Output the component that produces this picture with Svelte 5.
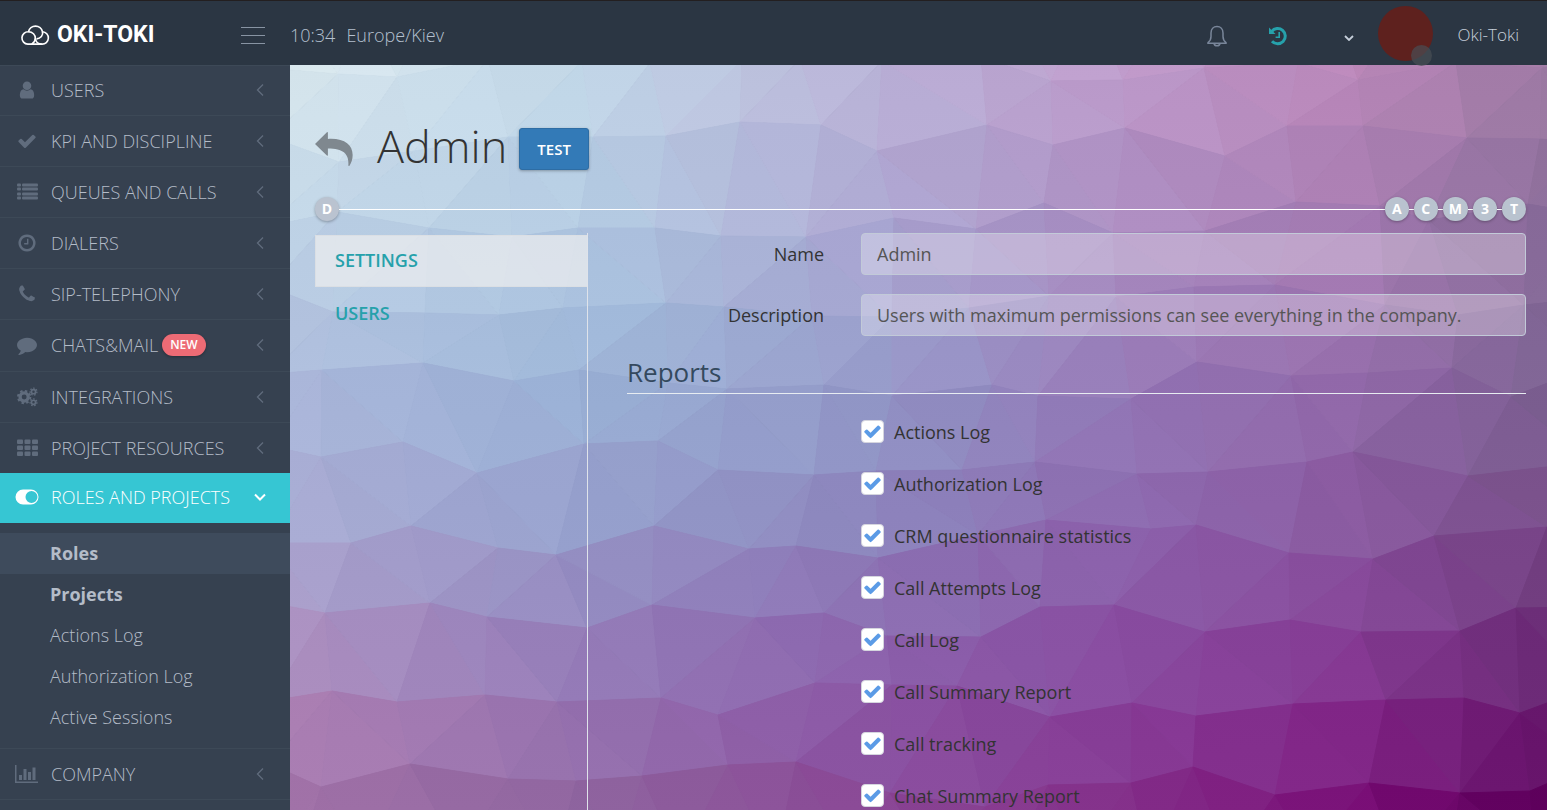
<script lang="ts">
  type Point = [number, number];
  type Rgb = [number, number, number];

  interface MenuItem {
    label: string;
    icon: string;
    badge?: string;
    active?: boolean;
    children?: { label: string; bold?: boolean; current?: boolean }[];
  }

  const menu: MenuItem[] = [
    { label: 'USERS', icon: 'user' },
    { label: 'KPI AND DISCIPLINE', icon: 'check' },
    { label: 'QUEUES AND CALLS', icon: 'list' },
    { label: 'DIALERS', icon: 'clock' },
    { label: 'SIP-TELEPHONY', icon: 'phone' },
    { label: 'CHATS&MAIL', icon: 'comment', badge: 'NEW' },
    { label: 'INTEGRATIONS', icon: 'cogs' },
    { label: 'PROJECT RESOURCES', icon: 'th' },
    {
      label: 'ROLES AND PROJECTS',
      icon: 'toggle',
      active: true,
      children: [
        { label: 'Roles', bold: true, current: true },
        { label: 'Projects', bold: true },
        { label: 'Actions Log' },
        { label: 'Authorization Log' },
        { label: 'Active Sessions' },
      ],
    },
    { label: 'COMPANY', icon: 'chart' },
  ];

  const letters = ['A', 'C', 'M', '3', 'T'];

  let name = $state('Admin');
  let description = $state('Users with maximum permissions can see everything in the company.');
  let reports = $state(
    [
      'Actions Log',
      'Authorization Log',
      'CRM questionnaire statistics',
      'Call Attempts Log',
      'Call Log',
      'Call Summary Report',
      'Call tracking',
      'Chat Summary Report',
    ].map((label) => ({ label, checked: true })),
  );

  // single-path icons on a 1792 grid
  const paths: Record<string, string> = {
    user: 'M1536 1399q0 109-62.5 187t-150.5 78h-854q-88 0-150.5-78t-62.5-187q0-85 8.5-160.5t31.5-152 58.5-131 94-89 134.5-34.5q131 128 313 128t313-128q76 0 134.5 34.5t94 89 58.5 131 31.5 152 8.5 160.5zm-256-887q0 159-112.5 271.5t-271.5 112.5-271.5-112.5-112.5-271.5 112.5-271.5 271.5-112.5 271.5 112.5 112.5 271.5z',
    check: 'M1671 566q0 40-28 68l-724 724-136 136q-28 28-68 28t-68-28l-136-136-362-362q-28-28-28-68t28-68l136-136q28-28 68-28t68 28l294 295 656-657q28-28 68-28t68 28l136 136q28 28 28 68z',
    clock: 'M1024 544v448q0 14-9 23t-23 9h-320q-14 0-23-9t-9-23v-64q0-14 9-23t23-9h224v-352q0-14 9-23t23-9h64q14 0 23 9t9 23zm416 352q0-148-73-273t-198-198-273-73-273 73-198 198-73 273 73 273 198 198 273 73 273-73 198-198 73-273zm224 0q0 209-103 385.5t-279.5 279.5-385.5 103-385.5-103-279.5-279.5-103-385.5 103-385.5 279.5-279.5 385.5-103 385.5 103 279.5 279.5 103 385.5z',
    phone: 'M1600 1240q0 27-10 70.5t-21 68.5q-21 50-122 106-94 51-186 51-27 0-53-3.5t-57.5-12.5-47-14.5-55.5-20.5-49-18q-98-35-175-83-127-79-264-216t-216-264q-48-77-83-175-3-9-18-49t-20.5-55.5-14.5-47-12.5-57.5-3.5-53q0-92 51-186 56-101 106-122 25-11 68.5-21t70.5-10q14 0 21 3 18 6 53 76 11 19 30 54t35 63.5 31 53.5q3 4 17.5 25t21.5 35.5 7 28.5q0 20-28.5 50t-62 55-62 53-28.5 46q0 9 5 22.5t8.5 20.5 14 24 11.5 19q76 137 174 235t235 174q2 1 19 11.5t24 14 20.5 8.5 22.5 5q18 0 46-28.5t53-62 55-62 50-28.5q14 0 28.5 7t35.5 21.5 25 17.5q25 15 53.5 31t63.5 35 54 30q70 35 76 53 3 7 3 21z',
    comment: 'M1792 896q0 174-120 321.5t-326 233-450 85.5q-70 0-145-8-198 175-460 242-49 14-114 22-17 2-30.5-9t-17.5-29v-1q-3-4-.5-12t2-10 4.5-9.5l6-9 7-8.5 8-9q7-8 31-34.5t34.5-38 31-39.5 32.5-51 27-59 26-76q-157-89-247.5-220t-90.5-281q0-130 71-248.5t191-204.5 286-136.5 348-50.5q244 0 450 85.5t326 233 120 321.5z',
  };

  // Low-poly backdrop: rows of vertices, triangulated strip by strip
  const rows: Point[][] = [
    [[-10, -70], [70, -60], [150, -75], [230, -65], [320, -60], [400, -70], [480, -60], [560, -65], [640, -75], [720, -60], [800, -70], [880, -60], [960, -65], [1040, -70], [1120, -60], [1200, -70], [1300, -60]],
    [[-12, 4], [48, 9], [107, 12], [198, -6], [292, -4], [360, -2], [452, -5], [510, -6], [592, -4], [691, -8], [761, 16], [833, 15], [914, 3], [1008, -2], [1068, 15], [1166, -3], [1252, 3], [1300, -5]],
    [[-20, 72], [49, 97], [124, 86], [218, 72], [303, 72], [376, 71], [450, 57], [531, 60], [587, 86], [697, 60], [763, 80], [835, 63], [935, 91], [997, 61], [1073, 61], [1177, 73], [1250, 74], [1300, 78]],
    [[-25, 162], [47, 147], [139, 163], [222, 172], [288, 163], [365, 163], [431, 171], [516, 172], [604, 153], [686, 164], [754, 138], [823, 168], [915, 166], [1006, 137], [1090, 141], [1139, 155], [1238, 139], [1300, 150]],
    [[-20, 222], [43, 247], [135, 248], [209, 250], [273, 243], [376, 238], [434, 242], [522, 251], [602, 252], [679, 243], [759, 231], [826, 232], [904, 222], [985, 220], [1095, 240], [1168, 250], [1234, 240], [1300, 233]],
    [[-20, 309], [32, 305], [133, 298], [224, 316], [289, 305], [378, 318], [437, 324], [534, 320], [602, 331], [702, 320], [748, 331], [841, 334], [907, 297], [1001, 311], [1078, 308], [1162, 303], [1221, 332], [1300, 302]],
    [[-20, 381], [31, 392], [113, 377], [187, 408], [294, 379], [368, 376], [428, 405], [524, 410], [586, 406], [672, 405], [745, 397], [847, 409], [918, 407], [1017, 397], [1063, 387], [1178, 411], [1300, 397]],
    [[-20, 478], [61, 478], [121, 461], [208, 483], [266, 490], [364, 461], [459, 484], [506, 481], [588, 493], [688, 470], [756, 455], [861, 464], [906, 460], [999, 488], [1083, 494], [1144, 471], [1257, 462], [1310, 470]],
    [[-20, 538], [35, 548], [140, 538], [197, 552], [297, 563], [362, 540], [465, 553], [534, 548], [597, 571], [691, 572], [750, 542], [824, 540], [915, 567], [1000, 555], [1071, 567], [1170, 566], [1226, 543], [1300, 542]],
    [[-20, 636], [42, 626], [107, 637], [195, 630], [267, 637], [371, 633], [428, 650], [525, 618], [602, 620], [667, 621], [760, 652], [842, 638], [906, 651], [1003, 639], [1096, 635], [1174, 633], [1230, 648], [1300, 622]],
    [[-20, 699], [31, 722], [120, 699], [218, 714], [286, 716], [352, 711], [438, 700], [506, 697], [600, 728], [695, 742], [758, 720], [841, 718], [903, 702], [985, 730], [1079, 718], [1170, 728], [1240, 726], [1300, 700]],
    [[-20, 800], [10, 790], [75, 795], [170, 790], [265, 800], [330, 790], [390, 795], [485, 800], [560, 790], [640, 795], [720, 800], [790, 790], [860, 800], [940, 795], [1020, 790], [1110, 800], [1160, 795], [1245, 790], [1320, 800]],
  ];

  const stopsX = [0, 300, 600, 840, 1060, 1257];
  const stopsY = [0, 160, 320, 450, 560, 650, 745];
  const palette = [
    ['dbe9ef', 'c5daea', 'bcb4d8', 'c09ccc', 'bd88ba', 'a07ca4'],
    ['c0d5e7', 'b0c8e1', 'aca5d1', 'a98abf', 'a67cb2', '896c9a'],
    ['abb9db', '9ab3d7', '9298c8', '9477b6', '936bab', '7c6292'],
    ['a9abd3', '969fcc', '8c82bb', '8d69af', '8a59a0', '784c88'],
    ['ab97c6', '9381bb', '8c67af', '8a53a4', '874298', '6d337a'],
    ['ae82b6', '9674b2', '8a55a5', '873f99', '832c8b', '6a1c70'],
    ['a172a8', '8f65a0', '8a4695', '842f8a', '7a0f77', '5e005c'],
  ].map((row) => row.map((hex) => [0, 2, 4].map((i) => parseInt(hex.slice(i, i + 2), 16)) as Rgb));

  function locate(stops: number[], value: number): [number, number] {
    const v = Math.min(Math.max(value, 0), stops[stops.length - 1]);
    let i = 0;
    while (i < stops.length - 2 && v > stops[i + 1]) i++;
    return [i, (v - stops[i]) / (stops[i + 1] - stops[i])];
  }

  function colorAt(x: number, y: number, shade: number): string {
    const [i, tx] = locate(stopsX, x);
    const [j, ty] = locate(stopsY, y);
    const channels = [0, 1, 2].map((c) => {
      const top = palette[j][i][c] * (1 - tx) + palette[j][i + 1][c] * tx;
      const bottom = palette[j + 1][i][c] * (1 - tx) + palette[j + 1][i + 1][c] * tx;
      return Math.max(0, Math.round(top * (1 - ty) + bottom * ty + shade));
    });
    return `rgb(${channels.join(',')})`;
  }

  function buildFacets() {
    const facets: { points: string; y1: number; y2: number; from: string; to: string }[] = [];
    for (let r = 0; r < rows.length - 1; r++) {
      const a = rows[r];
      const b = rows[r + 1];
      const bandY = (a[0][1] + b[0][1]) / 2;
      let i = 0;
      let j = 0;
      while (i < a.length - 1 || j < b.length - 1) {
        const down =
          j === b.length - 1 ||
          (i < a.length - 1 &&
            Math.hypot(a[i + 1][0] - b[j][0], a[i + 1][1] - b[j][1]) <
              Math.hypot(a[i][0] - b[j + 1][0], a[i][1] - b[j + 1][1]));
        const tri: Point[] = down ? [a[i], a[i + 1], b[j]] : [a[i], b[j + 1], b[j]];
        if (down) i++;
        else j++;
        const cx = (tri[0][0] + tri[1][0] + tri[2][0]) / 3;
        const cy = (tri[0][1] + tri[1][1] + tri[2][1]) / 3;
        const ys = tri.map((p) => p[1]);
        const jitter = ((facets.length * 7) % 3) - 1;
        // pull each facet toward its band so neighbours differ little sideways
        const y = (cy + bandY) / 2;
        facets.push({
          points: tri.map((p) => p.join(',')).join(' '),
          y1: Math.min(...ys),
          y2: Math.max(...ys),
          from: colorAt(cx, y, jitter - 1),
          to: colorAt(cx, y, jitter + 1),
        });
      }
    }
    return facets;
  }

  const facets = buildFacets();
</script>

{#snippet icon(kind: string)}
  {#if paths[kind]}
    <svg class="icon" viewBox="0 0 1792 1792" aria-hidden="true"><path d={paths[kind]} /></svg>
  {:else if kind === 'list'}
    <svg class="icon icon--wide" viewBox="0 0 21 17" aria-hidden="true">
      {#each [0, 4, 9, 13] as y}
        <rect x="0" {y} width="4" height="3" rx="1" />
        <rect x="5" {y} width="16" height="3" rx="1" />
      {/each}
    </svg>
  {:else if kind === 'th'}
    <svg class="icon icon--wide" viewBox="0 0 21 17" aria-hidden="true">
      {#each [0, 6, 12] as y}
        {#each [0, 7.5, 15] as x}
          <rect {x} {y} width="6" height="4.6" rx="1" />
        {/each}
      {/each}
    </svg>
  {:else if kind === 'cogs'}
    <svg class="icon icon--wide" viewBox="0 0 22 20" aria-hidden="true">
      <g fill="none" stroke="currentColor">
        <circle cx="7.5" cy="10" r="4.3" stroke-width="3.4" />
        <circle cx="7.5" cy="10" r="6.5" stroke-width="2" stroke-dasharray="2.6 2.5" />
        <circle cx="17.3" cy="4.4" r="2.2" stroke-width="1.8" />
        <circle cx="17.3" cy="4.4" r="3.6" stroke-width="1.3" stroke-dasharray="1.6 1.63" />
        <circle cx="17.3" cy="15.6" r="2.2" stroke-width="1.8" />
        <circle cx="17.3" cy="15.6" r="3.6" stroke-width="1.3" stroke-dasharray="1.6 1.63" />
      </g>
    </svg>
  {:else if kind === 'toggle'}
    <svg class="icon icon--toggle" viewBox="0 0 24 16" aria-hidden="true">
      <path
        fill-rule="evenodd"
        d="M8 .5h8a7.500 7.500 0 0 1 0 15H8A7.500 7.500 0 0 1 8 .5zm8.500 1.500a6 6 0 1 0 0 12 6 6 0 0 0 0-12z"
      />
    </svg>
  {:else if kind === 'chart'}
    <svg class="icon icon--toggle" viewBox="0 0 24 18" aria-hidden="true">
      <path d="M0 0h1.500v16.500H23V18H0zM4 10h3v5H4zM8.500 4h3v11h-3zM13 7h3v8h-3zM17.500 2.500h3V15h-3z" />
    </svg>
  {/if}
{/snippet}

<div class="page">
  <header class="topbar">
    <div class="topbar__brand">
      <a class="logo" href="#home">
        <svg class="logo__mark" viewBox="-3 -1 92 66" aria-hidden="true">
          <g fill="none" stroke="#fff" stroke-width="5">
            <path d="M21 60A19 19 0 1 1 23 22A22 22 0 0 1 66 22A19 19 0 1 1 64 60Z" />
            <path d="M23 22C36 22 44 32 44 42C44 50 39 56 33 60" />
            <path d="M66 22C69 33 60 43 48 44" />
            <path d="M44 42C46 54 54 60 64 60" />
          </g>
        </svg>
        <span>OKI-TOKI</span>
      </a>
      <button class="burger" type="button" aria-label="Toggle menu">
        <span></span>
        <span></span>
        <span></span>
      </button>
    </div>
    <div class="topbar__time"><span>10:34</span><span>Europe/Kiev</span></div>
    <div class="topbar__tools">
      <button class="tool tool--bell" type="button" aria-label="Notifications">
        <svg viewBox="0 0 20 22" width="20" height="22" fill="none" stroke="currentColor" stroke-width="1.500">
          <path d="M1 17.500c2-1.500 3-3 3-6V8c0-4 2.500-6.500 6-6.500S16 4 16 8v3.500c0 3 1 4.500 3 6v.8H1z" />
          <path d="M7 18.500c.3 1.500 1.500 2.300 3 2.300s2.700-.8 3-2.300" />
        </svg>
      </button>
      <button class="tool tool--history" type="button" aria-label="History">
        <svg viewBox="0 0 20 20" width="20" height="20" fill="none" stroke="currentColor">
          <path d="M3.600 5.600A7.600 7.600 0 1 1 4 15.200" stroke-width="3" />
          <path d="M1 1.500v6.500h6.500z" fill="currentColor" stroke="none" />
          <path d="M11.200 6v5.200H7.600" stroke-width="1.600" />
        </svg>
      </button>
      <button class="tool tool--more" type="button" aria-label="More">
        <svg viewBox="0 0 10 6" width="10" height="6" fill="none" stroke="currentColor" stroke-width="1.800">
          <path d="M1 1l4 4 4-4" />
        </svg>
      </button>
      <div class="avatar"><span class="avatar__status"></span></div>
      <a class="topbar__user" href="#profile">Oki-Toki</a>
    </div>
  </header>

  <div class="body">
    <nav class="sidebar">
      <ul class="menu">
        {#each menu as item}
          <li class="menu__item" class:menu__item--active={item.active} class:menu__item--badge={item.badge}>
            <a class="menu__link" href="#menu">
              <span class="menu__icon">{@render icon(item.icon)}</span>
              <span>{item.label}</span>
              {#if item.badge}
                <span class="menu__badge">{item.badge}</span>
              {/if}
              {#if item.active}
                <svg class="menu__arrow" viewBox="0 0 12 18" aria-hidden="true"><path d="M1 6.500l5 5 5-5" /></svg>
              {:else}
                <svg class="menu__arrow" viewBox="0 0 12 18" aria-hidden="true"><path d="M9 3.500L3.500 9l5.500 5.500" /></svg>
              {/if}
            </a>
            {#if item.children}
              <ul class="submenu">
                {#each item.children as child}
                  <li>
                    <a
                      class="submenu__link"
                      class:submenu__link--bold={child.bold}
                      class:submenu__link--current={child.current}
                      href="#submenu">{child.label}</a
                    >
                  </li>
                {/each}
              </ul>
            {/if}
          </li>
        {/each}
      </ul>
    </nav>

    <main class="content">
      <svg class="backdrop" viewBox="0 0 1257 745" preserveAspectRatio="none" aria-hidden="true">
        <defs>
          {#each facets as f, i}
            <linearGradient id="facet-{i}" gradientUnits="userSpaceOnUse" x1="0" x2="0" y1={f.y1} y2={f.y2}>
              <stop offset="0" stop-color={f.from} />
              <stop offset="1" stop-color={f.to} />
            </linearGradient>
          {/each}
        </defs>
        {#each facets as f, i}
          <polygon points={f.points} fill="url(#facet-{i})" stroke="url(#facet-{i})" stroke-width="1" />
        {/each}
      </svg>

      <div class="title">
        <a class="title__back" href="#back" aria-label="Back">
          <svg viewBox="0 0 115 103" width="38" height="34">
            <path d="M0 36L36 1Q39-1 39 3V21C88 18 114 38 114 70C114 84 110 94 104 103Q101 104 101 100C103 68 88 50 39 50V69Q39 74 36 71Z" />
          </svg>
        </a>
        <h1>Admin</h1>
        <button class="btn" type="button">TEST</button>
      </div>

      <div class="letters">
        <button class="letter letter--left" type="button">D</button>
        <span class="letters__line"></span>
        {#each letters as letter, i}
          {#if i > 0}<span class="letters__dash"></span>{/if}
          <button class="letter" type="button">{letter}</button>
        {/each}
      </div>

      <div class="columns">
        <nav class="tabs">
          <a class="tabs__link tabs__link--active" href="#settings">SETTINGS</a>
          <a class="tabs__link" href="#users">USERS</a>
        </nav>

        <form class="form">
          <div class="form__row">
            <label for="role-name">Name</label>
            <input id="role-name" class="field" type="text" bind:value={name} />
          </div>
          <div class="form__row">
            <label for="role-description">Description</label>
            <input id="role-description" class="field" type="text" bind:value={description} />
          </div>
          <h2>Reports</h2>
          <div class="checks">
            {#each reports as report}
              <label class="check">
                <span class="check__box">
                  <input type="checkbox" bind:checked={report.checked} />
                  {#if report.checked}
                    <svg viewBox="0 0 1792 1792" aria-hidden="true"><path d={paths.check} /></svg>
                  {/if}
                </span>
                {report.label}
              </label>
            {/each}
          </div>
        </form>
      </div>
    </main>
  </div>
</div>

<style>
  :global(body) {
    margin: 0;
    background: #364150;
  }

  .page {
    display: flex;
    flex-direction: column;
    min-height: 100vh;
    font-family: 'Open Sans', sans-serif;
    font-size: 18px;
    line-height: 24px;
    color: #333;
  }

  .page * {
    box-sizing: border-box;
  }

  button {
    padding: 0;
    border: 0;
    background: none;
    font-family: inherit;
    cursor: pointer;
  }

  a {
    color: inherit;
    text-decoration: none;
  }

  ul {
    margin: 0;
    padding: 0;
    list-style: none;
  }

  /* Top bar */
  .topbar {
    display: flex;
    align-items: center;
    height: 65px;
    padding-top: 4px;
    border-top: 1px solid #231f20;
    background: #2b3643;
    color: #b4c0cf;
  }

  .topbar__brand {
    display: flex;
    align-items: center;
    justify-content: space-between;
    width: 290px;
    padding: 0 25px 0 20px;
  }

  .logo {
    display: flex;
    align-items: center;
    gap: 7px;
    color: #fff;
    font-family: Roboto, sans-serif;
    font-size: 23px;
    font-weight: 700;
  }

  .logo__mark {
    width: 30px;
    height: 22px;
  }

  .burger {
    display: flex;
    flex-direction: column;
    gap: 7px;
    width: 24px;
  }

  .burger span {
    height: 1px;
    background: #8894a3;
  }

  .topbar__time {
    display: flex;
    gap: 11px;
    font-weight: 300;
  }

  .topbar__tools {
    display: flex;
    align-items: center;
    margin-left: auto;
    padding-right: 28px;
  }

  .tool {
    display: flex;
  }

  .tool--bell {
    margin-right: 41px;
    padding-top: 2px;
    color: #79869a;
  }

  .tool--history {
    margin-right: 56px;
    padding-top: 2px;
    color: #26a1ab;
  }

  .tool--more {
    margin-right: 24px;
    padding-top: 6px;
    color: #c6cfda;
  }

  .avatar {
    position: relative;
    width: 55px;
    height: 55px;
    margin: 0 25px 4px 0;
    border-radius: 50%;
    background: #5e211e;
  }

  .avatar__status {
    position: absolute;
    right: 1px;
    bottom: -5px;
    width: 21px;
    height: 21px;
    border-radius: 50%;
    background: rgba(72, 79, 84, 0.7);
  }

  .topbar__user {
    font-size: 17px;
    font-weight: 300;
    color: #c6cfda;
  }

  .body {
    display: flex;
    flex: 1;
  }

  /* Sidebar */
  .sidebar {
    flex: none;
    width: 290px;
    background: #364150;
    color: #b4bcc8;
  }

  .menu {
    border-bottom: 1px solid #3d4957;
  }

  .menu__link {
    display: flex;
    align-items: center;
    height: 51px;
    padding: 0 24px 1px 15px;
    border-top: 1px solid #3d4957;
    font-weight: 300;
  }

  .menu__item:first-child .menu__link {
    height: 50px;
  }

  .menu__item--badge .menu__link {
    height: 52px;
  }

  .menu__item--active .menu__link {
    height: 50px;
    padding-bottom: 3px;
    border-top-color: #36c6d3;
    background: #36c6d3;
    color: #fff;
  }

  .menu__icon {
    display: flex;
    justify-content: center;
    width: 24px;
    margin-right: 12px;
    color: #606c7d;
  }

  .menu__item--active .menu__icon {
    color: #fff;
  }

  .icon {
    width: 20px;
    height: 20px;
    fill: currentColor;
  }

  .icon--wide {
    width: 21px;
  }

  .icon--toggle {
    width: 24px;
    height: 18px;
  }

  .menu__badge {
    height: 22px;
    margin-left: 4px;
    padding: 0 8px;
    border-radius: 11px;
    background: #ed6b75;
    box-shadow: 0 1px 3px rgba(0, 0, 0, 0.3);
    color: #fff;
    font-size: 12px;
    font-weight: 600;
    line-height: 22px;
  }

  .menu__arrow {
    width: 12px;
    height: 18px;
    margin-left: auto;
    fill: none;
    stroke: #606c7d;
    stroke-width: 1.3;
  }

  .menu__item--active .menu__arrow {
    stroke: #fff;
    stroke-width: 2;
  }

  .submenu {
    padding: 10px 0;
  }

  .submenu__link {
    display: block;
    height: 41px;
    padding-left: 50px;
    font-weight: 300;
    line-height: 41px;
  }

  .submenu__link--bold {
    font-weight: 700;
  }

  .submenu__link--current {
    background: #3e4b5c;
  }

  /* Content */
  .content {
    position: relative;
    display: flex;
    flex: 1;
    flex-direction: column;
    min-width: 0;
    padding: 63px 21px 0 25px;
  }

  .backdrop {
    position: absolute;
    inset: 0;
    z-index: -1;
    width: 100%;
    height: 100%;
  }

  .title {
    display: flex;
    align-items: center;
    height: 42px;
  }

  .title__back {
    display: flex;
    margin-right: 24px;
    fill: #7f888f;
  }

  h1 {
    margin: 0 12px 0 0;
    padding-bottom: 6px;
    font-size: 45px;
    font-weight: 300;
    line-height: 42px;
  }

  .btn {
    height: 42px;
    padding: 0 17px;
    border: 1px solid #2e6da4;
    border-radius: 3px;
    background: #337ab7;
    box-shadow: 0 1px 3px rgba(0, 0, 0, 0.3);
    color: #fff;
    font-size: 15px;
    font-weight: 600;
  }

  .letters {
    display: flex;
    align-items: center;
    margin: 27px 0 12px;
  }

  .letters__line {
    flex: 1;
    height: 1px;
    background: #fff;
  }

  .letters__dash {
    width: 5px;
    height: 1px;
    background: #fff;
  }

  .letter {
    min-width: 24px;
    height: 24px;
    padding: 0 6px;
    border-radius: 12px;
    background: #b9c3cf;
    box-shadow: 0 1px 3px rgba(0, 0, 0, 0.3);
    color: #fff;
    font-size: 14px;
    font-weight: 700;
    line-height: 22px;
  }

  .letter--left {
    background: #bac3d0;
  }

  .columns {
    display: flex;
    flex: 1;
    gap: 39px;
  }

  .tabs {
    flex: none;
    width: 273px;
    padding-top: 2px;
    border-right: 1px solid #dfe3ea;
  }

  .tabs__link {
    display: block;
    padding: 14px 20px;
    color: #26a1ab;
    font-weight: 600;
  }

  .tabs__link--active {
    padding: 12px 19px 14px;
    border: 1px solid #dbdfe4;
    border-right: 0;
    background: rgba(240, 240, 240, 0.7);
  }

  .form {
    flex: 1;
    min-width: 0;
  }

  .form__row {
    display: grid;
    grid-template-columns: 197px 1fr;
    gap: 37px;
    align-items: center;
    margin-bottom: 19px;
  }

  .form__row label {
    text-align: right;
  }

  .field {
    width: 100%;
    height: 42px;
    padding: 0 15px;
    border: 1px solid #c2cad8;
    border-radius: 4px;
    background: rgba(255, 255, 255, 0.3);
    color: #555;
    font-family: inherit;
    font-size: 18px;
  }

  h2 {
    margin: 0 0 26px;
    padding-bottom: 4px;
    border-bottom: 1px solid #e7ecf1;
    color: #34495e;
    font-size: 26px;
    font-weight: 400;
    line-height: 34px;
  }

  .checks {
    display: grid;
    gap: 29px;
    padding-left: 234px;
  }

  .check {
    display: flex;
    align-items: center;
    gap: 10px;
    height: 23px;
  }

  .check__box {
    display: grid;
    place-items: center;
    width: 23px;
    height: 23px;
  }

  .check__box input,
  .check__box svg {
    grid-area: 1 / 1;
  }

  .check__box input {
    width: 23px;
    height: 23px;
    margin: 0;
    appearance: none;
    border: 1px solid #d5d5de;
    border-radius: 4px;
    background: #fff;
  }

  .check__box svg {
    width: 19px;
    height: 19px;
    fill: #5b9be6;
    pointer-events: none;
  }
</style>
